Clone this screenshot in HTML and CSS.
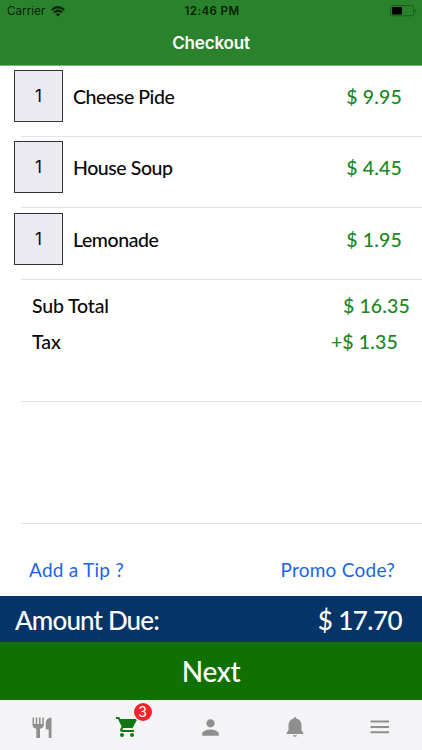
FILE: index.html
```html
<!DOCTYPE html>
<html lang="en">
<head>
<meta charset="utf-8">
<title>Checkout</title>
<link rel="stylesheet" href="styles.css">
</head>
<body>
<header class="header">
  <div class="status">
    <div class="carrier"><span>Carrier</span>
      <svg class="wifi" width="14" height="11" viewBox="0 0 14 11"><g fill="none" stroke="#061f08" stroke-width="2"><path d="M.7 4.1Q7-1.9 13.3 4.1"/><path d="M3 6.5Q7 2.8 11 6.5"/></g><path d="M4.8 8.2Q7 6.3 9.2 8.2L7 10.5z" fill="#061f08"/></svg>
    </div>
    <div class="clock">12:46 PM</div>
    <svg class="battery" width="27" height="12" viewBox="0 0 27 12"><rect x=".6" y=".6" width="23" height="10.2" rx="2" fill="none" stroke="#175c1b"/><rect x="2" y="2" width="10" height="7.4" rx=".6" fill="#000"/><path d="M25 4v4q1.4-.6 1.4-2T25 4z" fill="#175c1b"/></svg>
  </div>
  <h1 class="title">Checkout</h1>
</header>
<main>
  <section class="item"><div class="qty">1</div><span class="name">Cheese Pide</span><span class="price">$ 9.95</span></section>
  <section class="item"><div class="qty">1</div><span class="name">House Soup</span><span class="price">$ 4.45</span></section>
  <section class="item last"><div class="qty">1</div><span class="name">Lemonade</span><span class="price">$ 1.95</span></section>
  <section class="totals">
    <div class="line"><span class="sub-label">Sub Total</span><span class="amount">$ 16.35</span></div>
    <div class="line tax"><span>Tax</span><span class="amount">+$ 1.35</span></div>
  </section>
  <section class="blank"></section>
  <section class="links"><a class="tip">Add a Tip ?</a><a class="promo">Promo Code?</a></section>
</main>
<div class="due"><span class="due-label">Amount Due:</span><span class="due-amount">$ 17.70</span></div>
<div class="next"><span>Next</span></div>
<nav class="tabs">
  <div class="tab"><svg width="20" height="21" viewBox="0 0 20 21" fill="#8f8f8f"><path d="M.5.5H2V7h1.700V.5h1.600V7H7V.5h1.600V7h1.700V.5h1.500V8q0 3-3.800 3.800V21H4.300v-9.200Q.5 11 .5 8zM19.500.5V21h-2.800v-8.500h-2.900V5.500q.5-4.500 5.700-5z"/></svg></div>
  <div class="tab"><div class="cart"><svg width="24" height="24" viewBox="0 0 24 24" fill="#117611"><path d="M1 2h3.300l.9 2H21l.8 1.300-4.300 7.700H8.100L7.200 15H19v2H7q-2.500-.7-1.700-3l1.300-2.400L3 4H1z"/><circle cx="7" cy="20" r="2"/><circle cx="17" cy="20" r="2"/></svg><span class="badge">3</span></div></div>
  <div class="tab"><svg width="25" height="25" viewBox="0 0 24 24" fill="#8f8f8f"><path d="M12 12c2.210 0 4-1.790 4-4s-1.790-4-4-4-4 1.790-4 4 1.790 4 4 4zm0 2c-2.670 0-8 1.340-8 4v2h16v-2c0-2.660-5.330-4-8-4z"/></svg></div>
  <div class="tab"><svg width="24" height="24" viewBox="0 0 24 24" fill="#8f8f8f"><path d="M10 20.300h4q-.4 1.500-2 1.500t-2-1.500zM12 2q1.300 0 1.500 1.800c3.400.7 5 3.200 5 6.400v5.300l1.700 2V19H3.800v-1.500l1.700-2v-5.300c0-3.200 1.600-5.700 5-6.400Q10.700 2 12 2z"/></svg></div>
  <div class="tab"><svg width="20" height="14" viewBox="0 0 20 14" fill="#8f8f8f"><path d="M.5.500h18.500v2H.5zM.5 6h18.500v2H.5zM.5 11.300h18.500v2H.5z"/></svg></div>
</nav>
</body>
</html>
```
FILE: styles.css
```css
* { box-sizing: border-box; }
body { margin: 0; width: 422px; height: 750px; overflow: hidden; background: #fff; font-family: Lato, "Liberation Sans", sans-serif; color: #090909; white-space: nowrap; }
svg { display: block; }
.header { height: 66px; background: #2a832c; border-bottom: 1px solid #7fb280; font-family: Inter, sans-serif; }
.status { height: 22px; display: grid; grid-template-columns: 1fr auto 1fr; align-items: center; padding: 0 5px 0 7px; color: #061f08; font-size: 11.5px; }
.carrier { display: flex; align-items: center; gap: 6px; letter-spacing: .1px; }
.clock { font-weight: 600; letter-spacing: .4px; }
.battery { justify-self: end; }
.title { margin: 0; height: 43px; line-height: 43px; text-align: center; color: #fff; font-size: 17px; font-weight: 600; letter-spacing: -.15px; }
.item, .totals, .blank { background: linear-gradient(#e2e2e4, #e2e2e4) 21px 100% / 401px 1px no-repeat; }
.item { height: 71px; display: flex; align-items: flex-start; padding: 4px 20px 0 14px; font-size: 19.5px; font-weight: 500; line-height: 54px; }
.item.last { height: 72px; padding-top: 5px; }
.qty { width: 49px; height: 52px; border: 1.5px solid #333337; background: #ebeaf1; text-align: center; line-height: 50px; font-family: Inter, sans-serif; font-size: 17px; font-weight: 400; margin-right: 10px; }
.name { letter-spacing: -.43px; }
.price { margin-left: auto; }
.price, .amount { color: #218522; letter-spacing: .15px; }
.totals { height: 122px; padding: 13px 12px 0 32px; font-size: 19.5px; font-weight: 500; }
.line { height: 26px; line-height: 26px; display: flex; justify-content: space-between; }
.sub-label { letter-spacing: -.15px; }
.line.tax { margin-top: 10px; padding-right: 12px; }
.blank { height: 122px; }
.links { height: 72px; display: flex; justify-content: space-between; align-items: center; padding: 19px 27px 0 29px; color: #1b64e6; font-size: 19px; letter-spacing: .25px; }
.due { height: 46px; background: #053469; color: #fff; display: flex; justify-content: space-between; align-items: center; padding: 2px 20px 0 15px; font-size: 26px; font-weight: 500; }
.due-label { letter-spacing: -.85px; }
.due-amount { letter-spacing: -.55px; }
.next { height: 58px; background: #107000; color: #fff; display: flex; justify-content: center; align-items: center; font-size: 28px; font-weight: 500; letter-spacing: -.4px; }
.tabs { height: 50px; background: #f4f4f6; display: grid; grid-template-columns: repeat(5, 1fr); padding-top: 4px; }
.tab { display: flex; justify-content: center; align-items: center; }
.cart { position: relative; }
.badge { position: absolute; left: 19px; top: -12px; width: 18px; height: 18px; border-radius: 50%; background: #f52229; color: #fff; font: 14px/18px Inter, sans-serif; text-align: center; }
```
